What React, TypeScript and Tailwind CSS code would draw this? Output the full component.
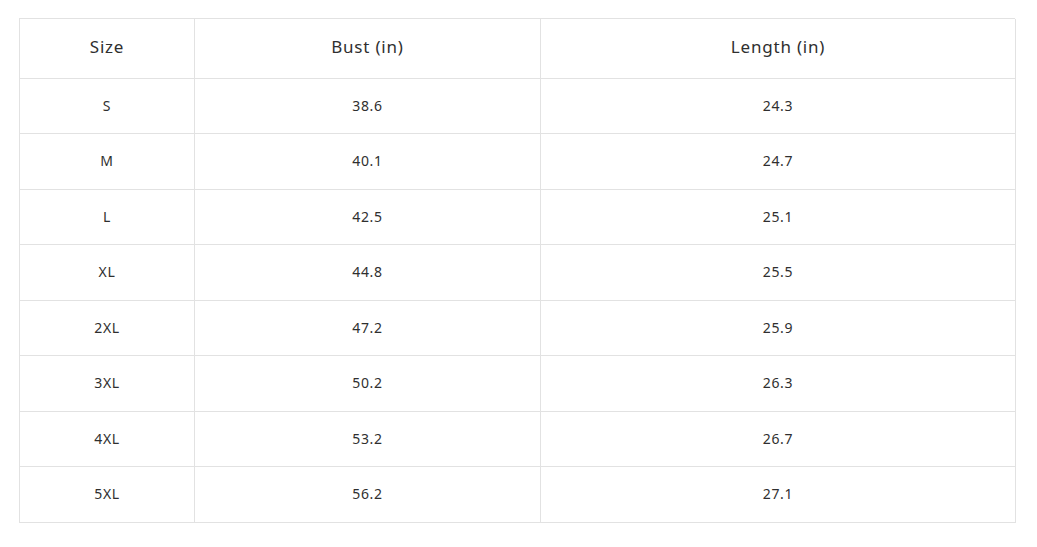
import React from "react";

const rows = [
  ["S", "38.6", "24.3"],
  ["M", "40.1", "24.7"],
  ["L", "42.5", "25.1"],
  ["XL", "44.8", "25.5"],
  ["2XL", "47.2", "25.9"],
  ["3XL", "50.2", "26.3"],
  ["4XL", "53.2", "26.7"],
  ["5XL", "56.2", "27.1"],
];

export default function App() {
  return (
    <div
      className="w-[1037px] h-[547px] bg-white pt-[18px] pl-[19px]"
      style={{ fontFamily: '"Noto Sans", "Open Sans", sans-serif' }}
    >
      <div className="grid grid-cols-[175px_346px_475px] grid-rows-[60px_55px_56px_55px_56px_55px_56px_55px_56px] w-[996px] border-l border-t border-[#e2e2e2] text-[#2f2f2f]">
        {["Size", "Bust (in)", "Length (in)"].map((h) => (
          <div
            key={h}
            className="flex items-center justify-center border-r border-b border-[#e2e2e2] text-[17px] tracking-[0.8px] pb-[3px]"
          >
            {h}
          </div>
        ))}
        {rows.map((r) =>
          r.map((c, i) => (
            <div
              key={r[0] + i}
              className="flex items-center justify-center border-r border-b border-[#e2e2e2] text-[14px] tracking-[0.7px] pb-[2px]"
            >
              {c}
            </div>
          ))
        )}
      </div>
    </div>
  );
}
